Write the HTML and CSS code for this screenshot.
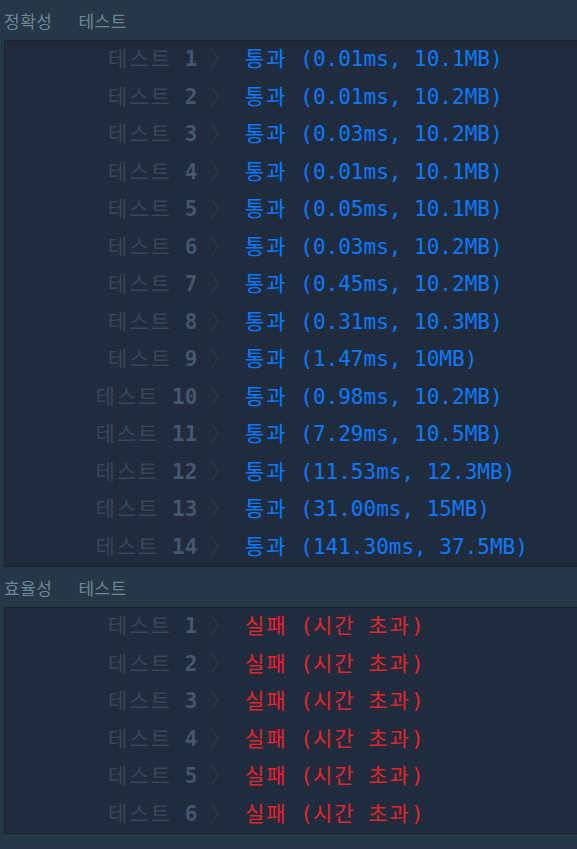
FILE: index.html
```html
<!DOCTYPE html>
<html lang="ko">
<head>
    <meta charset="UTF-8">
    <meta name="viewport" content="width=device-width, initial-scale=1.0">
    <title>채점 결과</title>
    <link rel="stylesheet" href="styles.css">
</head>
<body>

    <div class="console">
        <div class="group-title"><span>정확성</span><span>테스트</span></div>
        <div class="test-table">
            <div class="row"><div class="label"><span class="ko">테스트</span> <b>1</b> <i>〉</i></div><div class="result pass"><span class="ko">통과</span> (0.01ms, 10.1MB)</div></div>
            <div class="row"><div class="label"><span class="ko">테스트</span> <b>2</b> <i>〉</i></div><div class="result pass"><span class="ko">통과</span> (0.01ms, 10.2MB)</div></div>
            <div class="row"><div class="label"><span class="ko">테스트</span> <b>3</b> <i>〉</i></div><div class="result pass"><span class="ko">통과</span> (0.03ms, 10.2MB)</div></div>
            <div class="row"><div class="label"><span class="ko">테스트</span> <b>4</b> <i>〉</i></div><div class="result pass"><span class="ko">통과</span> (0.01ms, 10.1MB)</div></div>
            <div class="row"><div class="label"><span class="ko">테스트</span> <b>5</b> <i>〉</i></div><div class="result pass"><span class="ko">통과</span> (0.05ms, 10.1MB)</div></div>
            <div class="row"><div class="label"><span class="ko">테스트</span> <b>6</b> <i>〉</i></div><div class="result pass"><span class="ko">통과</span> (0.03ms, 10.2MB)</div></div>
            <div class="row"><div class="label"><span class="ko">테스트</span> <b>7</b> <i>〉</i></div><div class="result pass"><span class="ko">통과</span> (0.45ms, 10.2MB)</div></div>
            <div class="row"><div class="label"><span class="ko">테스트</span> <b>8</b> <i>〉</i></div><div class="result pass"><span class="ko">통과</span> (0.31ms, 10.3MB)</div></div>
            <div class="row"><div class="label"><span class="ko">테스트</span> <b>9</b> <i>〉</i></div><div class="result pass"><span class="ko">통과</span> (1.47ms, 10MB)</div></div>
            <div class="row"><div class="label"><span class="ko">테스트</span> <b>10</b> <i>〉</i></div><div class="result pass"><span class="ko">통과</span> (0.98ms, 10.2MB)</div></div>
            <div class="row"><div class="label"><span class="ko">테스트</span> <b>11</b> <i>〉</i></div><div class="result pass"><span class="ko">통과</span> (7.29ms, 10.5MB)</div></div>
            <div class="row"><div class="label"><span class="ko">테스트</span> <b>12</b> <i>〉</i></div><div class="result pass"><span class="ko">통과</span> (11.53ms, 12.3MB)</div></div>
            <div class="row"><div class="label"><span class="ko">테스트</span> <b>13</b> <i>〉</i></div><div class="result pass"><span class="ko">통과</span> (31.00ms, 15MB)</div></div>
            <div class="row"><div class="label"><span class="ko">테스트</span> <b>14</b> <i>〉</i></div><div class="result pass"><span class="ko">통과</span> (141.30ms, 37.5MB)</div></div>
        </div>

        <div class="group-title"><span>효율성</span><span>테스트</span></div>
        <div class="test-table">
            <div class="row"><div class="label"><span class="ko">테스트</span> <b>1</b> <i>〉</i></div><div class="result fail"><span class="ko">실패</span> (<span class="ko">시간</span> <span class="ko">초과</span>)</div></div>
            <div class="row"><div class="label"><span class="ko">테스트</span> <b>2</b> <i>〉</i></div><div class="result fail"><span class="ko">실패</span> (<span class="ko">시간</span> <span class="ko">초과</span>)</div></div>
            <div class="row"><div class="label"><span class="ko">테스트</span> <b>3</b> <i>〉</i></div><div class="result fail"><span class="ko">실패</span> (<span class="ko">시간</span> <span class="ko">초과</span>)</div></div>
            <div class="row"><div class="label"><span class="ko">테스트</span> <b>4</b> <i>〉</i></div><div class="result fail"><span class="ko">실패</span> (<span class="ko">시간</span> <span class="ko">초과</span>)</div></div>
            <div class="row"><div class="label"><span class="ko">테스트</span> <b>5</b> <i>〉</i></div><div class="result fail"><span class="ko">실패</span> (<span class="ko">시간</span> <span class="ko">초과</span>)</div></div>
            <div class="row"><div class="label"><span class="ko">테스트</span> <b>6</b> <i>〉</i></div><div class="result fail"><span class="ko">실패</span> (<span class="ko">시간</span> <span class="ko">초과</span>)</div></div>
        </div>
    </div>

</body>
</html>
```

FILE: styles.css
```css
body {
    margin: 0;
    background-color: #263747;
    font-family: 'DejaVu Sans Mono', 'Noto Sans CJK KR', monospace;
    overflow: hidden;
}

.console {
    padding-left: 4px;
    width: 573px;
}

.group-title {
    display: flex;
    gap: 26px;
    height: 40px;
    align-items: center;
    font-family: 'Noto Sans CJK KR', sans-serif;
    font-size: 17px;
    letter-spacing: 0.5px;
    color: #6b8898;
}

.test-table {
    background-color: #202b3d;
    border: 1px solid #172130;
    border-right: none;
}

.row {
    display: flex;
    height: 37.5px;
    line-height: 37.5px;
    font-size: 21px;
    white-space: pre;
}

.label {
    width: 226px;
    text-align: right;
    color: #37475a;
}

.label b {
    color: #43576e;
}

.label i {
    font-style: normal;
    color: #2b394b;
}

.result {
    padding-left: 14px;
}

.ko {
    letter-spacing: 2px;
}

.pass {
    color: #0a7bff;
}

.fail {
    color: #e3262b;
}
```
